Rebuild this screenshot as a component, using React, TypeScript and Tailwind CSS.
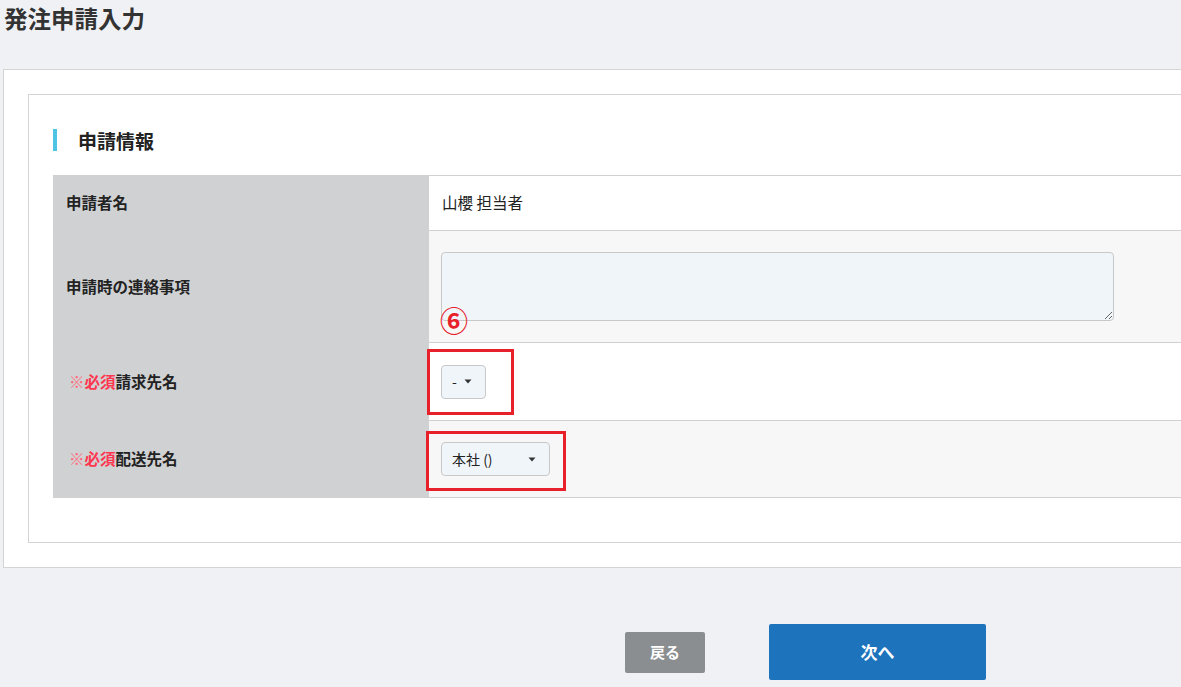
import React from 'react';

const Required: React.FC = () => (
  <span className="font-bold text-[#ff3650]">
    <span className="font-normal text-[#ff6b7d]">※</span>必須
  </span>
);

const Caret: React.FC = () => (
  <svg width="8" height="5" viewBox="0 0 8 5" className="fill-[#333]">
    <path d="M0.5 0.5 L7.5 0.5 L4 4.5 Z" />
  </svg>
);

const App: React.FC = () => {
  return (
    <div
      className="relative h-[687px] w-[1181px] overflow-hidden bg-[#f0f1f5] text-[#222]"
      style={{ fontFamily: '"Noto Sans CJK JP", "Noto Sans", sans-serif' }}
    >
      <h1 className="pl-[4px] pt-0 text-[23.5px] font-bold leading-[36px] text-[#333]">発注申請入力</h1>

      {/* outer panel */}
      <div className="ml-[3px] mt-[33px] w-[1320px] border border-[#d4d4d4] bg-white p-6">
        <div className="border border-[#d4d4d4] px-6 pb-[44px] pt-[34px]">
          <div className="flex h-[22px] items-center border-l-4 border-[#4ec3e4] pl-[21px]">
            <h2 className="text-[19px] font-bold leading-none text-[#222]">申請情報</h2>
          </div>

          <div className="mt-[24px] border-b border-[#d0d0d0] text-[15.5px]">
            {/* row 1 */}
            <div className="flex h-[55px] border-t border-[#d0d0d0]">
              <div className="flex w-[376px] items-center bg-[#d0d1d3] pl-[13px] font-bold">申請者名</div>
              <div className="flex flex-1 items-center bg-white pl-[13px] text-[15.5px]">山櫻 担当者</div>
            </div>
            {/* row 2 */}
            <div className="flex h-[112px] border-t border-[#d0d0d0]">
              <div className="flex w-[376px] items-center bg-[#d0d1d3] pl-[13px] font-bold">申請時の連絡事項</div>
              <div className="relative flex-1 bg-[#f7f7f7] pl-3 pt-[21px]">
                <textarea className="block h-[69px] w-[673px] rounded-[4px] border border-[#c8c8c8] bg-[#f0f5fa]" />
                <span className="absolute left-[11px] top-[75px] text-[28px] font-bold leading-none text-[#e8202a]">⑥</span>
              </div>
            </div>
            {/* row 3 */}
            <div className="flex h-[78px] border-t border-[#d0d0d0]">
              <div className="flex w-[376px] items-center bg-[#d0d1d3] pl-[16px] font-bold">
                <Required />
                請求先名
              </div>
              <div className="flex flex-1 items-center bg-white pl-3">
                <div className="flex h-[34px] w-[45px] items-center gap-[7px] rounded-[4px] border border-[#c8c8c8] bg-[#f0f5fa] pl-[10px] text-[14px]">
                  <span>-</span>
                  <Caret />
                </div>
              </div>
            </div>
            {/* row 4 */}
            <div className="flex h-[77px] border-t border-[#d0d0d0]">
              <div className="flex w-[376px] items-center bg-[#d0d1d3] pl-[16px] font-bold">
                <Required />
                配送先名
              </div>
              <div className="flex flex-1 items-center bg-[#f7f7f7] pl-3">
                <div className="flex h-[34px] w-[109px] items-center justify-between rounded-[4px] border border-[#c8c8c8] bg-[#f0f5fa] pl-[10px] pr-[13px] text-[14px]">
                  <span>本社 ()</span>
                  <Caret />
                </div>
              </div>
            </div>
          </div>
        </div>
      </div>

      {/* annotation boxes */}
      <div className="absolute left-[427px] top-[349px] h-[66px] w-[87px] border-[3px] border-[#e8202a]" />
      <div className="absolute left-[426px] top-[431px] h-[60px] w-[140px] border-[3px] border-[#e8202a]" />

      <div className="mt-[56px] flex items-center pl-[625px]">
        <button className="h-[41px] w-[80px] rounded-[2px] bg-[#8b8e91] text-[15px] font-bold text-white">戻る</button>
        <button className="ml-[64px] h-[56px] w-[217px] rounded-[2px] bg-[#1e73bd] text-[17px] font-bold text-white">次へ</button>
      </div>
    </div>
  );
};

export default App;
